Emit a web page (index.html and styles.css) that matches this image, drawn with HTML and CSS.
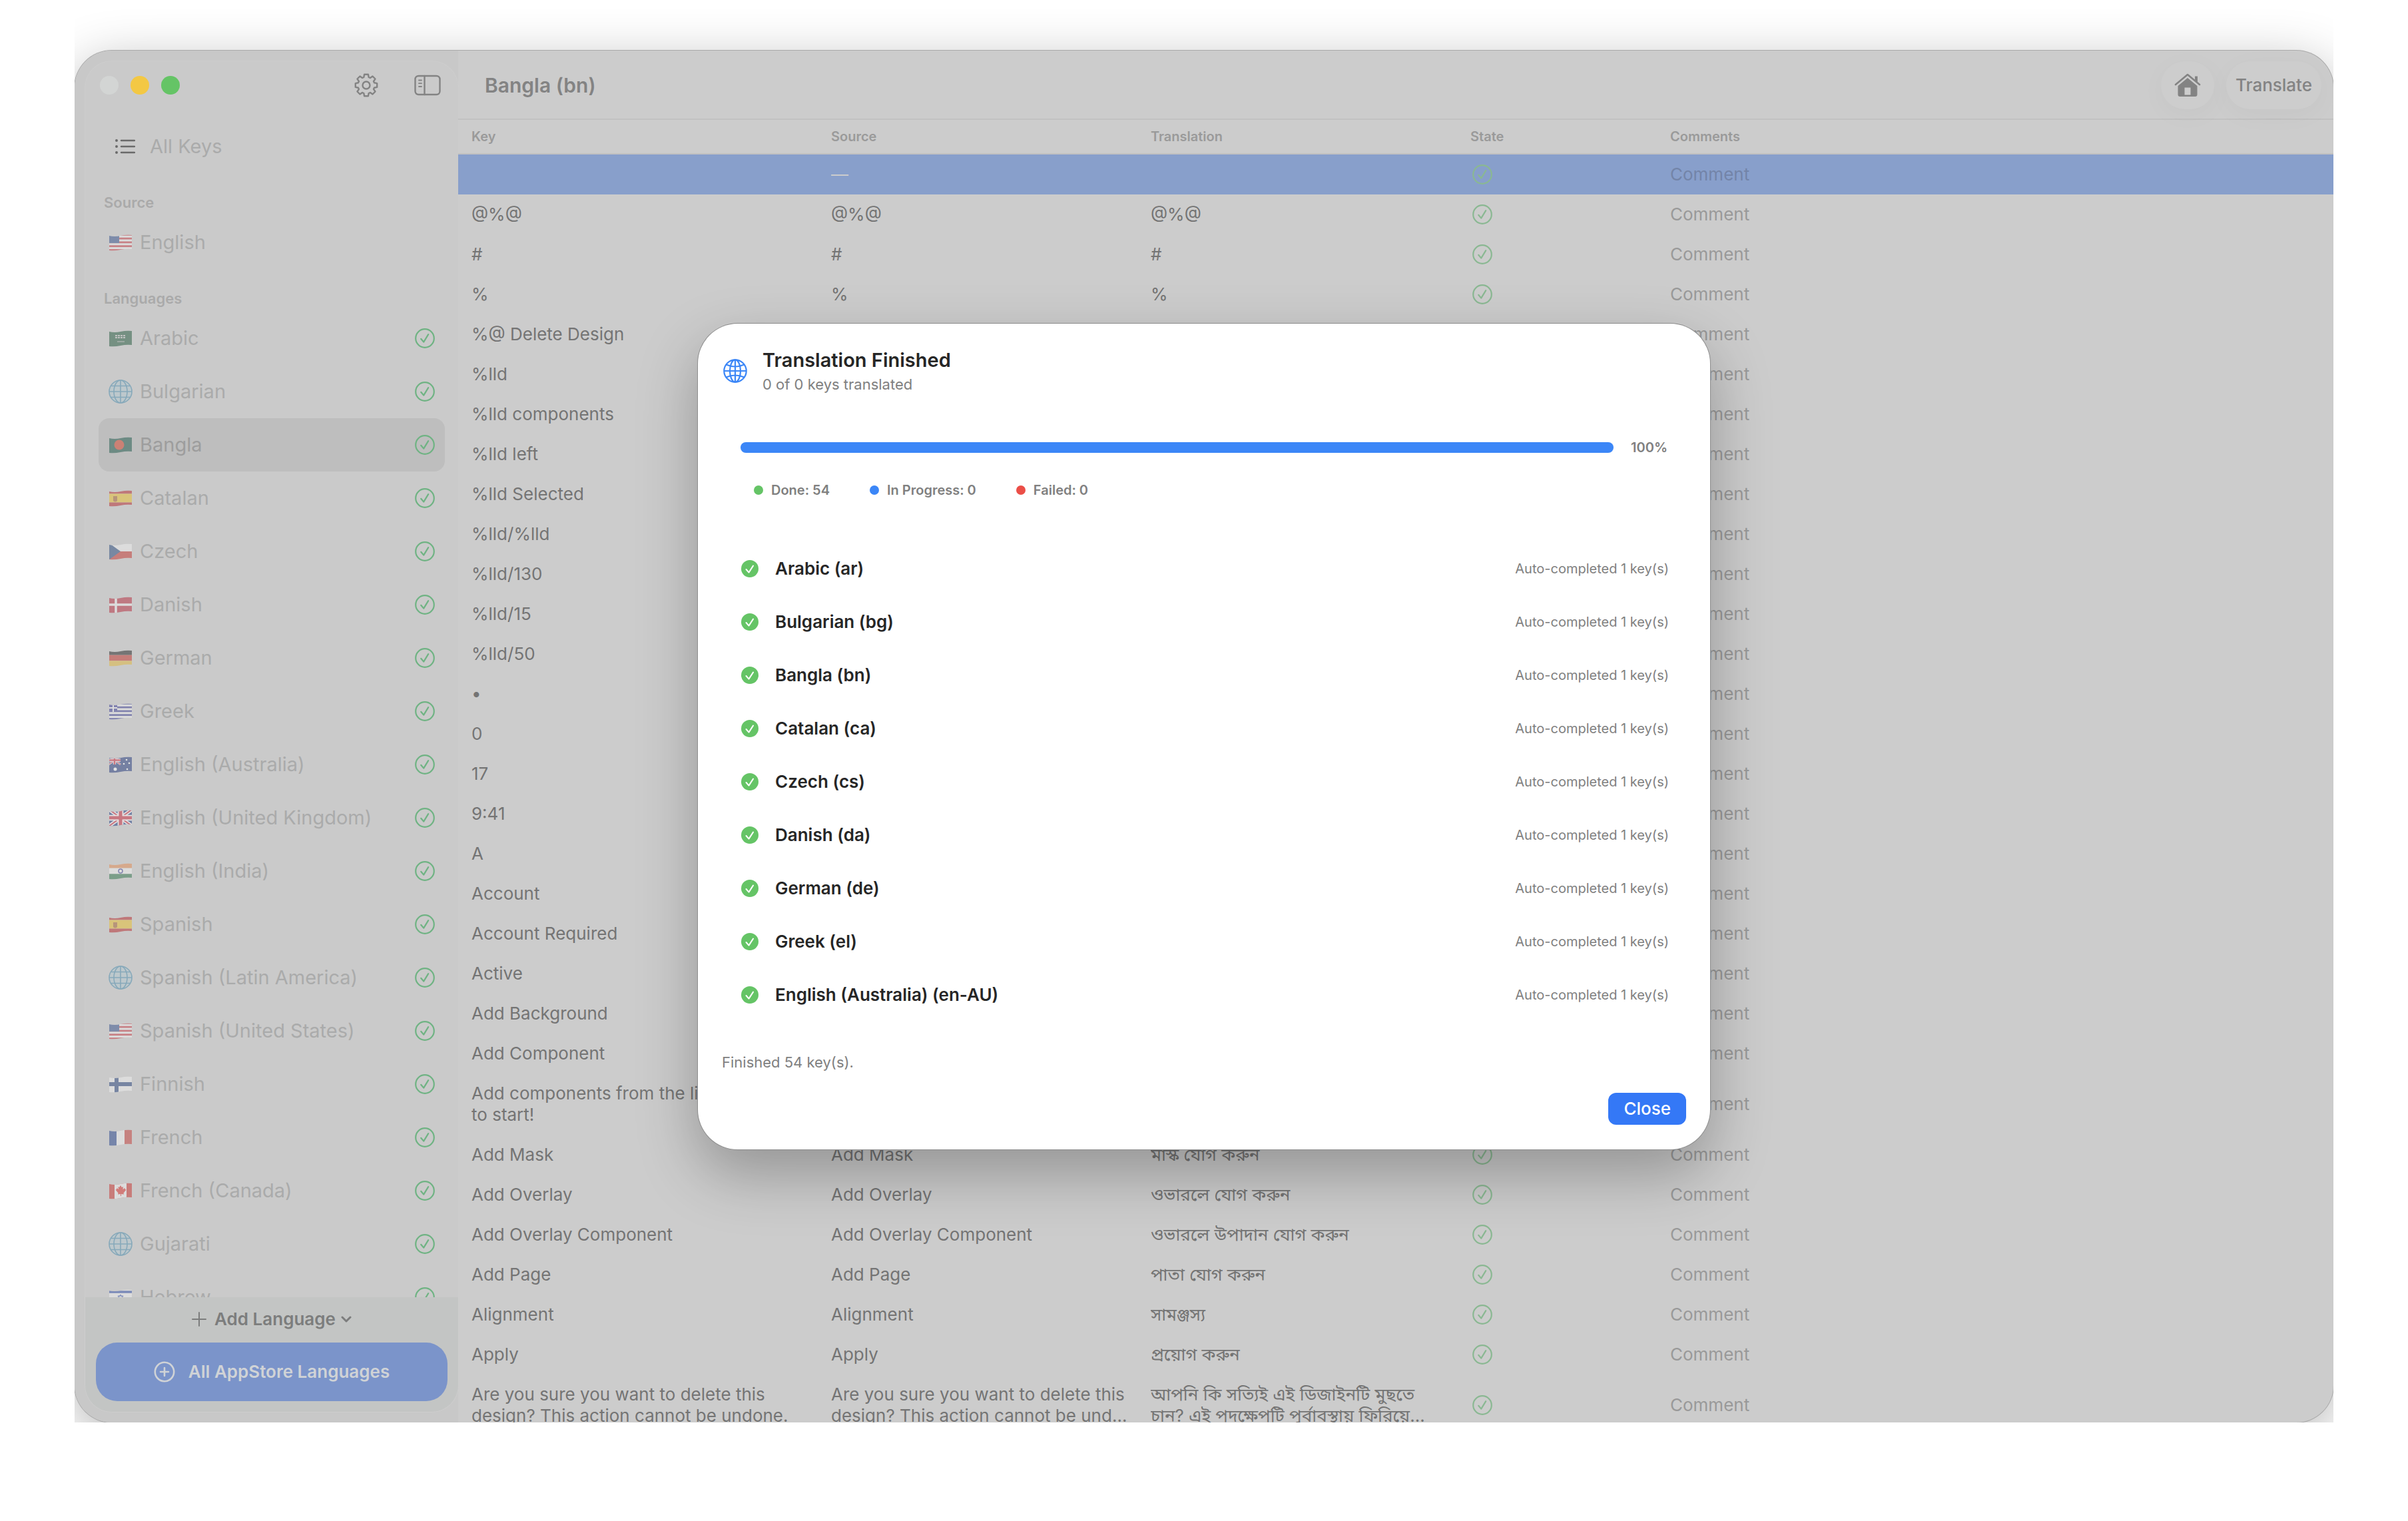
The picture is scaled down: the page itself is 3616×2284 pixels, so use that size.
FILE: index.html
```html
<!DOCTYPE html>
<html lang="en">
<head>
    <meta charset="UTF-8">
    <meta name="viewport" content="width=device-width, initial-scale=1.0">
    <title>Bangla (bn)</title>
    <link rel="stylesheet" href="styles.css">
</head>
<body>

    <!-- shared icons -->
    <svg class="defs" aria-hidden="true">
        <symbol id="check" viewBox="0 0 30 30">
            <circle cx="15" cy="15" r="13.8" fill="none" stroke="currentColor" stroke-width="2.2"/>
            <path d="M9.2 15.8l4 4.8 7-11.4" fill="none" stroke="currentColor" stroke-width="2.2" stroke-linecap="round" stroke-linejoin="round"/>
        </symbol>
        <symbol id="done" viewBox="0 0 26 26">
            <circle cx="13" cy="13" r="13" fill="#65c466"/>
            <path d="M7.5 14l4 4.6 6.5-10" fill="none" stroke="#fff" stroke-width="2" stroke-linecap="round" stroke-linejoin="round"/>
        </symbol>
        <symbol id="globe" viewBox="0 0 36 36">
            <g fill="none" stroke="currentColor" stroke-width="2.2">
                <circle cx="18" cy="18" r="16.7"/>
                <ellipse cx="18" cy="18" rx="8" ry="16.7"/>
                <path d="M18 1.3v33.4M1.3 18h33.4M4.5 8.5q13.5 6 27 0M4.5 27.5q13.5-6 27 0"/>
            </g>
        </symbol>
        <symbol id="world" viewBox="0 0 36 36">
            <circle cx="18" cy="18" r="17" fill="#bdc8cc"/>
            <g fill="none" stroke="#87a9ba" stroke-width="1.6">
                <circle cx="18" cy="18" r="17"/>
                <ellipse cx="18" cy="18" rx="10" ry="17"/>
                <path d="M18 1v34M1 18h34M4 9.5h28M4 26.5h28"/>
            </g>
        </symbol>
        <clipPath id="wave"><path d="M1 3q8 2 17 0t17-1v21q-8-1-17 1t-17 1z"/></clipPath>
    </svg>

    <div class="stage">
        <div class="window">
            <aside class="sidebar">
                <div class="panel">
                    <div class="controls">
                        <span class="light off"></span>
                        <span class="light yellow"></span>
                        <span class="light green"></span>
                        <button class="gear" aria-label="Settings">
                            <svg viewBox="0 0 36 36" width="36" height="36"><g fill="none" stroke="currentColor" stroke-width="2.4" stroke-linejoin="round"><path id="gearPath"/><circle cx="18" cy="18" r="5.5"/></g></svg>
                        </button>
                        <button aria-label="Toggle sidebar">
                            <svg viewBox="0 0 40 32" width="40" height="32"><g fill="none" stroke="currentColor" stroke-width="2.4" stroke-linecap="round"><rect x="1.5" y="2" width="37" height="28" rx="5"/><path d="M15.5 2v28"/><path stroke-width="1.8" d="M7 8.5h4M7 13.2h4M7 18h4"/></g></svg>
                        </button>
                    </div>
                    <a href="#" class="all-keys">
                        <svg viewBox="0 0 30 24" width="30" height="24"><g stroke="#6a6a6a" stroke-width="2.4" stroke-linecap="round"><path d="M9 3h20M9 12h20M9 21h20"/><path stroke-width="4" d="M2 3h0M2 12h0M2 21h0"/></g></svg>
                        All Keys
                    </a>
                    <h2>Source</h2>
                    <ul id="source"></ul>
                    <h2>Languages</h2>
                    <ul id="languages" class="languages"></ul>
                    <div class="footer">
                        <button class="add-language">
                            <svg class="plus" viewBox="0 0 22 22" width="22" height="22"><path d="M11 1v20M1 11h20" stroke="currentColor" stroke-width="2" stroke-linecap="round"/></svg>
                            Add Language
                            <svg viewBox="0 0 16 16" width="16" height="16"><path d="M2 5l6 6 6-6" fill="none" stroke="currentColor" stroke-width="3" stroke-linecap="round" stroke-linejoin="round"/></svg>
                        </button>
                        <button class="all-languages">
                            <svg viewBox="0 0 32 32" width="32" height="32"><g fill="none" stroke="currentColor" stroke-width="2.6" stroke-linecap="round"><circle cx="16" cy="16" r="14.2"/><path d="M16 10v12M10 16h12"/></g></svg>
                            All AppStore Languages
                        </button>
                    </div>
                </div>
            </aside>

            <main>
                <header class="toolbar">
                    <h1>Bangla (bn)</h1>
                    <button class="pill home" aria-label="Home">
                        <svg viewBox="0 0 40 36" width="40" height="36"><path d="M2 17L20 2l18 15" fill="none" stroke="currentColor" stroke-width="2.6" stroke-linecap="round" stroke-linejoin="round"/><path d="M31 4.5h4v9.5l-4-3.5z" fill="currentColor"/><path d="M20 7L5.5 19V32q0 3 3 3h23q3 0 3-3V19zM15.5 21.5h9v11h-9z" fill="currentColor" fill-rule="evenodd"/></svg>
                    </button>
                    <button class="pill">Translate</button>
                </header>
                <table>
                    <colgroup>
                        <col class="col-key">
                        <col class="col-text">
                        <col class="col-text">
                        <col class="col-state">
                        <col>
                    </colgroup>
                    <thead>
                        <tr><th>Key</th><th>Source</th><th>Translation</th><th>State</th><th>Comments</th></tr>
                    </thead>
                    <tbody id="keys"></tbody>
                </table>
            </main>

            <section class="sheet" role="dialog" aria-labelledby="sheetTitle">
                <div class="sheet-head">
                    <svg width="36" height="36"><use href="#globe"/></svg>
                    <div>
                        <h2 id="sheetTitle">Translation Finished</h2>
                        <p>0 of 0 keys translated</p>
                    </div>
                </div>
                <div class="progress">
                    <div class="bar" role="progressbar" aria-label="Translated" aria-valuenow="100"></div>
                    <span>100%</span>
                </div>
                <div class="legend">
                    <span class="done">Done: 54</span>
                    <span class="running">In Progress: 0</span>
                    <span class="failed">Failed: 0</span>
                </div>
                <ul id="results" class="results"></ul>
                <p class="summary">Finished 54 key(s).</p>
                <button class="close">Close</button>
            </section>
        </div>
    </div>

    <script src="script.js"></script>
</body>
</html>
```
FILE: styles.css
```css
* {
    box-sizing: border-box;
}
body {
    margin: 0;
    background: #fff;
    font-family: Inter, "Noto Sans Bengali", "Noto Sans", sans-serif;
    font-size: 26px;
    line-height: 32px;
    color: #747474;
}
h1, h2, p, ul {
    margin: 0;
    padding: 0;
}
ul {
    list-style: none;
}
a {
    color: inherit;
    text-decoration: none;
}
button {
    border: none;
    background: none;
    padding: 0;
    font: inherit;
    color: inherit;
    cursor: pointer;
}
svg {
    display: block;
    flex: none;
}
.defs {
    position: absolute;
    width: 0;
    height: 0;
}

/* window */
.stage {
    margin: 0 112px;
    padding-top: 76px;
    overflow: hidden;
}
.window {
    position: relative;
    display: flex;
    height: 2060px;
    border-radius: 56px;
    background: #ccc;
    box-shadow: 0 0 0 1px #aaa, 0 20px 80px rgba(0, 0, 0, 0.3);
}

/* sidebar */
.sidebar {
    width: 576px;
    padding: 16px 0 16px 16px;
    flex: none;
    background: #c8c8c8;
    border-radius: 56px 0 0 56px;
}
.panel {
    display: flex;
    flex-direction: column;
    height: 100%;
    border-radius: 40px;
    overflow: hidden;
    background: #cacaca;
    box-shadow: 0 0 0 1px #cdcdcd;
}
.controls {
    display: flex;
    align-items: center;
    height: 72px;
    padding: 0 26px 0 22px;
    gap: 18px;
    color: #838383;
    flex: none;
}
.light {
    width: 28px;
    height: 28px;
    border-radius: 50%;
}
.off {
    background: #d3d5d4;
}
.yellow {
    background: #f3c844;
}
.green {
    background: #65c466;
}
.gear {
    margin-left: auto;
    margin-right: 36px;
}
.all-keys {
    display: flex;
    align-items: center;
    gap: 22px;
    height: 80px;
    margin-top: 16px;
    padding-left: 45px;
    font-size: 29px;
    color: #aaabab;
    flex: none;
}
.panel h2 {
    height: 64px;
    padding: 28px 28px 0;
    font-size: 22px;
    font-weight: 600;
    color: #aaa;
    flex: none;
}
.panel ul {
    padding: 0 20px;
}
.panel li {
    display: flex;
    align-items: center;
    gap: 11px;
    height: 80px;
    padding: 0 15px;
    border-radius: 16px;
    font-size: 29px;
    color: #aaabab;
}
.panel .languages {
    flex: 1;
    min-height: 0;
    overflow: hidden;
}
.panel .selected {
    background: #bebebe;
    color: #9d9d9d;
}
.flag {
    opacity: 0.5;
}
.state {
    margin-left: auto;
    color: #6fb383;
}
.footer {
    padding: 16px;
    background: #c3c5c4;
    flex: none;
}
.add-language {
    display: flex;
    align-items: center;
    justify-content: center;
    gap: 8px;
    width: 100%;
    height: 34px;
    margin-bottom: 18px;
    font-weight: 600;
    color: #7c7d7d;
}
.plus {
    margin-right: 4px;
}
.all-languages {
    display: flex;
    align-items: center;
    justify-content: center;
    gap: 20px;
    width: 100%;
    height: 88px;
    border-radius: 32px;
    background: #7b94ca;
    font-weight: 600;
    color: #d0d3d6;
}

/* key table */
main {
    flex: 1;
    min-width: 0;
    overflow: hidden;
    border-radius: 0 56px 56px 0;
}
.toolbar {
    display: flex;
    align-items: center;
    height: 104px;
    padding: 2px 18px 0 40px;
    border-bottom: 2px solid #c1c1c1;
    gap: 18px;
}
.toolbar h1 {
    margin-right: auto;
    font-size: 30px;
    font-weight: 600;
    color: #838383;
}
.pill {
    height: 72px;
    padding: 0 14px;
    border-radius: 36px;
    background: #cdcdcd;
    font-weight: 500;
    color: #838383;
    box-shadow: 0 8px 40px rgba(0, 0, 0, 0.03);
}
.home {
    padding: 0 20px;
}
table {
    width: 100%;
    table-layout: fixed;
    border-collapse: separate;
    border-spacing: 0;
}
.col-key {
    width: 540px;
}
.col-text {
    width: 480px;
}
.col-state {
    width: 300px;
}
th {
    height: 52px;
    padding: 0 20px;
    border-bottom: 2px solid #c1c1c1;
    font-size: 20px;
    font-weight: 600;
    text-align: left;
    color: #9a9a9a;
}
td {
    height: 60px;
    padding: 14px 12px 14px 20px;
    vertical-align: middle;
}
td span {
    display: -webkit-box;
    max-height: 64px;
    overflow: hidden;
    -webkit-box-orient: vertical;
    -webkit-line-clamp: 2;
}
td .state {
    margin: 0 0 0 3px;
    color: #8ab892;
}
.comment {
    color: #999;
}
.current {
    background: #889fcb;
    color: #ccc;
}
.current .comment {
    color: #7384a8;
}

/* translation sheet, centred over the window */
.sheet {
    position: absolute;
    inset: 0;
    margin: auto;
    display: flex;
    flex-direction: column;
    width: 1520px;
    height: 1240px;
    padding: 36px;
    border-radius: 60px;
    background: #fff;
    box-shadow: 0 0 0 1px #8c8c8c, 0 36px 90px rgba(0, 0, 0, 0.28);
}
.sheet-head {
    display: flex;
    align-items: center;
    gap: 23px;
    height: 70px;
    padding-left: 2px;
    color: #3b86f7;
}
.sheet-head h2 {
    font-size: 29px;
    line-height: 40px;
    font-weight: 600;
    color: #262626;
}
.sheet-head p, .summary {
    font-size: 22px;
    color: #808080;
}
.progress {
    display: flex;
    align-items: center;
    gap: 26px;
    height: 32px;
    margin: 64px 28px 0;
    font-size: 20px;
    font-weight: 600;
    color: #808080;
}
.bar {
    flex: 1;
    height: 16px;
    border-radius: 8px;
    background: #3b86f7;
}
.legend {
    display: flex;
    gap: 60px;
    margin: 32px 0 0 48px;
    font-size: 20px;
    font-weight: 600;
    color: #808080;
}
.legend span {
    display: flex;
    align-items: center;
    gap: 12px;
}
.legend span::before {
    content: "";
    width: 14px;
    height: 14px;
    border-radius: 50%;
    background: #65c466;
}
.legend .running::before {
    background: #3b86f7;
}
.legend .failed::before {
    background: #eb4e47;
}
.results {
    margin: 62px 26px 45px 29px;
}
.results li {
    display: flex;
    align-items: center;
    gap: 25px;
    height: 80px;
    font-weight: 600;
    color: #262626;
}
.results small {
    margin-left: auto;
    font-size: 20px;
    font-weight: 400;
    color: #808080;
}
.close {
    align-self: flex-end;
    height: 48px;
    margin-top: 30px;
    padding: 0 23px;
    border-radius: 12px;
    background: #3478f6;
    font-weight: 500;
    color: #fff;
}
```
FILE: script.js
```js
const check = size => `<svg class="state" width="${size}" height="${size}"><use href="#check"/></svg>`;

// flag artwork, clipped to the waving shape
const union = (w, h) => `<path d="M0 0h${w}v${h}H0z" fill="#1c3a80"/><path d="M0 0l${w} ${h}M${w} 0L0 ${h}" stroke="#fff" stroke-width="${h / 5}"/><path d="M0 0l${w} ${h}M${w} 0L0 ${h}" stroke="#c8283c" stroke-width="${h / 12}"/><path d="M${w / 2} 0v${h}M0 ${h / 2}h${w}" stroke="#fff" stroke-width="${h / 3}"/><path d="M${w / 2} 0v${h}M0 ${h / 2}h${w}" stroke="#c8283c" stroke-width="${h / 5}"/>`;
const bands = (...colors) => colors.map((c, i) => `<rect y="${i * 26 / colors.length}" width="36" height="${26 / colors.length}" fill="${c}"/>`).join("");
const spain = bands("#b5282d", "#e8c02c", "#e8c02c", "#b5282d") + '<path d="M7 10h6v7q-3 3-6 0z" fill="#a5622d"/>';
const usa = bands("#c83a44", "#eee", "#c83a44", "#eee", "#c83a44", "#eee", "#c83a44", "#eee", "#c83a44") + '<path d="M0 0h16v14H0z" fill="#34508c"/>';
const flags = {
    us: usa,
    sa: bands("#22583c") + '<path d="M10 9h16M10 12h16" stroke="#bbb" stroke-width="2" stroke-dasharray="3 1"/><path d="M13 18h11" stroke="#bbb"/>',
    bd: bands("#1f5a4c") + '<circle cx="16" cy="13" r="7.5" fill="#d8452f"/>',
    es: spain,
    cz: bands("#eee", "#c4342f") + '<path d="M0 0l18 13L0 26z" fill="#28497c"/>',
    dk: bands("#b52a3c") + '<path d="M11 0v26M0 13h36" stroke="#eee" stroke-width="3.5"/>',
    de: bands("#222", "#c4322a", "#e0b83a"),
    gr: bands("#3c3f96", "#eee", "#3c3f96", "#eee", "#3c3f96", "#eee", "#3c3f96", "#eee", "#3c3f96") + '<path d="M0 0h13v14H0z" fill="#3c3f96"/><path d="M7 0v14M0 8h13" stroke="#eee" stroke-width="2"/>',
    au: bands("#22387c") + union(18, 13) + '<g fill="#fff"><circle cx="10" cy="20" r="2.5"/><circle cx="27" cy="6" r="1.3"/><circle cx="23" cy="12" r="1.3"/><circle cx="31" cy="11" r="1.3"/><circle cx="28" cy="20" r="1.3"/></g>',
    gb: union(36, 26),
    "in": bands("#e38a4f", "#eee", "#2f744a") + '<circle cx="18" cy="13" r="3" fill="none" stroke="#3c3f96" stroke-width="1.5"/>',
    fi: bands("#eee") + '<path d="M12 0v26M0 13h36" stroke="#27437c" stroke-width="6"/>',
    fr: '<path d="M0 0h12v26H0z" fill="#24438c"/><path d="M12 0h12v26H12z" fill="#eee"/><path d="M24 0h12v26H24z" fill="#c43c38"/>',
    ca: '<path d="M0 0h36v26H0z" fill="#c8302c"/><path d="M9 0h18v26H9z" fill="#eee"/><path d="M18 5l2 3 2-1-.5 4 3-2 .5 2 1.5.5-4 5 .5 2-4-.5v3h-1v-3l-4 .5.5-2-4-5 1.5-.5.5-2 3 2L14 7l2 1z" fill="#d8302c"/>',
    il: bands("#eee") + '<path d="M0 5h36M0 21h36" stroke="#2f4ba8" stroke-width="3.5"/><path d="M18 9l4 6h-8zM18 17l4-6h-8z" fill="none" stroke="#2f4ba8"/>'
};
const flag = code => flags[code]
    ? `<svg class="flag" width="36" height="26"><g clip-path="url(#wave)">${flags[code]}</g></svg>`
    : '<svg width="36" height="36"><use href="#world"/></svg>';

const languages = [
    ["sa", "Arabic"], ["", "Bulgarian"], ["bd", "Bangla"], ["es", "Catalan"], ["cz", "Czech"],
    ["dk", "Danish"], ["de", "German"], ["gr", "Greek"], ["au", "English (Australia)"],
    ["gb", "English (United Kingdom)"], ["in", "English (India)"], ["es", "Spanish"],
    ["", "Spanish (Latin America)"], ["us", "Spanish (United States)"], ["fi", "Finnish"],
    ["fr", "French"], ["ca", "French (Canada)"], ["", "Gujarati"], ["il", "Hebrew"]
];
document.getElementById("source").innerHTML = `<li>${flag("us")}English</li>`;
document.getElementById("languages").innerHTML = languages.map(([code, name]) =>
    `<li${name === "Bangla" ? ' class="selected"' : ""}>${flag(code)}${name}${check(30)}</li>`).join("");

// key, translation, source (the key itself unless given)
const keys = [
    ["", "", "—"], ["@%@", "@%@"], ["#", "#"], ["%", "%"], ["%@ Delete Design", ""], ["%lld", "%lld"],
    ["%lld components", ""], ["%lld left", ""], ["%lld Selected", ""], ["%lld/%lld", "%lld/%lld"],
    ["%lld/130", "%lld/130"], ["%lld/15", "%lld/15"], ["%lld/50", "%lld/50"], ["•", "•"], ["0", "0"],
    ["17", "17"], ["9:41", "9:41"], ["A", "A"], ["Account", ""], ["Account Required", ""],
    ["Active", ""], ["Add Background", ""], ["Add Component", ""],
    ["Add components from the library<br>to start!", ""],
    ["Add Mask", "মাস্ক যোগ করুন"],
    ["Add Overlay", "ওভারলে যোগ করুন"],
    ["Add Overlay Component", "ওভারলে উপাদান যোগ করুন"],
    ["Add Page", "পাতা যোগ করুন"],
    ["Alignment", "সামঞ্জস্য"],
    ["Apply", "প্রয়োগ করুন"],
    ["Are you sure you want to delete this design? This action cannot be undone.",
        "আপনি কি সত্যিই এই ডিজাইনটি মুছতে চান? এই পদক্ষেপটি পূর্বাবস্থায় ফিরিয়ে আনা যাবে না।",
        "Are you sure you want to delete this design? This action cannot be und…"]
];
document.getElementById("keys").innerHTML = keys.map(([key, text, source = key], i) =>
    `<tr${i === 0 ? ' class="current"' : ""}><td><span>${key}</span></td><td><span>${source}</span></td><td><span>${text}</span></td><td>${check(30)}</td><td class="comment">Comment</td></tr>`).join("");

const results = ["Arabic (ar)", "Bulgarian (bg)", "Bangla (bn)", "Catalan (ca)", "Czech (cs)",
    "Danish (da)", "German (de)", "Greek (el)", "English (Australia) (en-AU)"];
document.getElementById("results").innerHTML = results.map(name =>
    `<li><svg width="26" height="26"><use href="#done"/></svg>${name}<small>Auto-completed 1 key(s)</small></li>`).join("");

// eight rounded teeth around the settings wheel
let d = "";
for (let i = 0; i < 8; i++) {
    [[-17, 12.5], [-10, 16.5], [10, 16.5], [17, 12.5]].forEach(([a, r]) => {
        const t = (i * 45 + a) * Math.PI / 180;
        d += (d ? "L" : "M") + (18 + r * Math.sin(t)).toFixed(1) + " " + (18 - r * Math.cos(t)).toFixed(1);
    });
}
document.getElementById("gearPath").setAttribute("d", d + "z");
```
